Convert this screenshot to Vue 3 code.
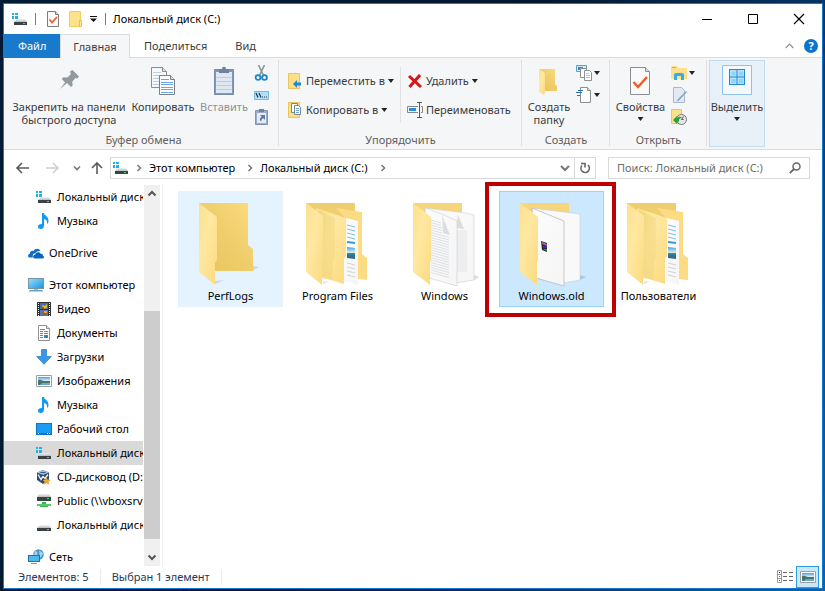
<script setup>
import { ref } from 'vue'

const query = ref('')
const tabs = ['Главная', 'Поделиться', 'Вид']
const crumbs = ['Этот компьютер', 'Локальный диск (C:)']

const tree = [
  [
    { icon: 'drive-win', label: 'Локальный диск (C:)', sub: true },
    { icon: 'music', label: 'Музыка', sub: true },
  ],
  [{ icon: 'cloud', label: 'OneDrive' }],
  [
    { icon: 'pc', label: 'Этот компьютер' },
    { icon: 'video', label: 'Видео', sub: true },
    { icon: 'document', label: 'Документы', sub: true },
    { icon: 'download', label: 'Загрузки', sub: true },
    { icon: 'picture', label: 'Изображения', sub: true },
    { icon: 'music', label: 'Музыка', sub: true },
    { icon: 'desktop', label: 'Рабочий стол', sub: true },
    { icon: 'drive-win', label: 'Локальный диск (C:)', sub: true, current: true },
    { icon: 'cd', label: 'CD-дисковод (D:)', sub: true },
    { icon: 'netdrive', label: 'Public (\\\\vboxsrv)', sub: true },
    { icon: 'drive', label: 'Локальный диск (E:)', sub: true },
  ],
  [{ icon: 'network', label: 'Сеть' }],
]

const files = [
  { icon: 'folder-empty', label: 'PerfLogs', state: 'hovered' },
  { icon: 'folder-mixed', label: 'Program Files' },
  { icon: 'folder-docs', label: 'Windows' },
  { icon: 'folder-old', label: 'Windows.old', state: 'selected', marked: true },
  { icon: 'folder-mixed', label: 'Пользователи' },
]
</script>

<template>
  <div class="screen">
    <svg class="sprite" aria-hidden="true">
      <defs>
        <linearGradient id="g-back" x1="0" x2="1" y1="1" y2="0">
          <stop offset="0" stop-color="#e9c45c" /><stop offset=".5" stop-color="#efcd6b" /><stop offset="1" stop-color="#fcdc80" />
        </linearGradient>
        <linearGradient id="g-flap" x1="0" x2="1" y1="0" y2="1">
          <stop offset="0" stop-color="#fbe08d" /><stop offset=".4" stop-color="#ffe8a2" /><stop offset="1" stop-color="#fbda7e" />
        </linearGradient>
        <linearGradient id="g-shade" x1="0" x2="1">
          <stop offset="0" stop-color="#e9cc6c" /><stop offset="1" stop-color="#f2d883" />
        </linearGradient>
        <linearGradient id="g-paper" x1="0" x2="1" y1="0" y2="1">
          <stop offset="0" stop-color="#fcfcfc" /><stop offset="1" stop-color="#f5f5f5" />
        </linearGradient>
        <linearGradient id="g-screen" x1="0" x2="1" y1="0" y2="1">
          <stop offset="0" stop-color="#8fdcff" /><stop offset="1" stop-color="#2196e0" />
        </linearGradient>
        <linearGradient id="g-photo" x1="0" x2="0" y1="0" y2="1">
          <stop offset="0" stop-color="#4e9fdb" /><stop offset=".45" stop-color="#d6edf8" /><stop offset=".55" stop-color="#3c7f86" /><stop offset="1" stop-color="#2b628d" />
        </linearGradient>
        <linearGradient id="g-drive" x1="0" x2="0" y1="0" y2="1">
          <stop offset="0" stop-color="#f2f2f2" /><stop offset="1" stop-color="#b9bbbd" />
        </linearGradient>
      </defs>

      <symbol id="drive" viewBox="0 0 16 16">
        <path d="M4 8h9l2 3H1z" fill="url(#g-drive)" />
        <path d="M1 11h14v3H1z" fill="#3c4145" />
        <path d="M11 12h2v1h-2z" fill="#35e04a" />
      </symbol>
      <symbol id="drive-win" viewBox="0 0 16 16">
        <path d="M5 8h8l2 3H2z" fill="url(#g-drive)" />
        <path d="M2 11h13v3H2z" fill="#3c4145" />
        <path d="M11 12h2v1h-2z" fill="#35e04a" />
        <path d="M0 2h2v2H0zM3 2h3v2H3zM0 5h2v3H0zM3 5h3v3H3z" fill="#18b4ea" />
      </symbol>
      <symbol id="music" viewBox="0 0 16 16">
        <path d="M6 0h2c0 3 5 3 4.500 8.500-.2 1.500-.8 2-1.500 2.500.6-3-.8-4.500-3-5v6.500C8 15 6.500 16 4.700 16 3 16 2 15 2 13.700c0-2 2-3 4-2.700z" fill="#0f9bf2" />
      </symbol>
      <symbol id="cloud" viewBox="0 0 16 16">
        <path d="M1 12.500C-.4 12-.3 9 1.800 8.700 1.800 6.500 4 5.300 5.600 6 7 3 11.500 3 12.300 6 9.500 5.500 8 7 7.500 8.200 5 8 4.200 10.500 5 12.500z" fill="#0f6fc6" />
        <path d="M6.500 13.500c-2-.5-2-3.800.8-4 .5-2.500 4-3.300 5.300-.8 1.800-.2 2.500 1 2.300 2 1.600.5 1.400 2.800-.2 2.800z" fill="#0a64c0" />
      </symbol>
      <symbol id="pc" viewBox="0 0 16 16">
        <path d="M0 1h16v11H0z" fill="#78939f" /><path d="M1 2h14v9H1z" fill="url(#g-screen)" />
        <path d="M6 12h4v1H6z" fill="#a9b4ba" /><path d="M1 13h14v2H1z" fill="#b9cbd3" /><path d="M2 13h12v1H2z" fill="#5ea8cf" />
      </symbol>
      <symbol id="video" viewBox="0 0 16 16">
        <path d="M1 1h14v14H1z" fill="#333" />
        <path d="M4 2h8v6H4z" fill="#456ea8" /><path d="M4 9h8v6H4z" fill="#5476a6" />
        <path d="M6 4l3 1 2-2v4l-4 1z" fill="#e8b92c" /><path d="M5 6h3v2H5z" fill="#c8432c" />
        <path d="M6 11l4-1 1 3-4 1z" fill="#b74a31" /><path d="M8 10h3v2H8z" fill="#d8ac35" />
        <path d="M2.500 2v13M13.500 2v13" stroke="#eee" stroke-dasharray="1 1" />
      </symbol>
      <symbol id="document" viewBox="0 0 16 16">
        <path d="M2.500.5h8l3 3v12h-11z" fill="#fff" stroke="#8d9499" /><path d="M10.500.5v3h3" fill="#ddd" stroke="#8d9499" />
        <path d="M4 4.500h5M4 6.500h3M8 6.500h4M4 8.500h3M8 8.500h4M4 10.500h3M4 12.500h3" stroke="#3f93c6" /><path d="M8 10h4v3H8z" fill="#3d84b4" />
      </symbol>
      <symbol id="download" viewBox="0 0 16 16">
        <path d="M5.500.5h5v7h4.800L8 15.300.7 7.500h4.800z" fill="#3a96e8" stroke="#2678c2" stroke-width=".7" />
      </symbol>
      <symbol id="picture" viewBox="0 0 16 16">
        <path d="M.5 2.500h15v11H.5z" fill="#fff" stroke="#9a9fa3" /><path d="M2 4h12v8H2z" fill="url(#g-photo)" />
        <path d="M2 7c3-1 5 2 12 2v3H2z" fill="#47746b" /><path d="M6 10h8v2H4z" fill="#6ea9d1" />
      </symbol>
      <symbol id="desktop" viewBox="0 0 16 16">
        <path d="M0 2h16v12H0z" fill="#0d76c7" /><path d="M1 3h14v9H1z" fill="#1b9cf4" /><path d="M2 12h1v1H2zM11 12h1v1h-1zM13 12h1v1h-1z" fill="#fff" />
      </symbol>
      <symbol id="cd" viewBox="0 0 16 16">
        <path d="M7 1l6 2.500v7L7 15l-6-4V3.500z" fill="#2c4a70" /><path d="M1 3.500L7 1l6 2.500L7 6z" fill="#a9bed4" />
        <path d="M2 5.500l3 5 2-3M7 7.500l2 2 3-4" stroke="#eaf1f7" fill="none" stroke-width="1.400" /><path d="M4.500 3.500h5" stroke="#365a85" />
        <path d="M10.500 8.500l1.300 2.200 2.700.3-1.800 1.800.4 2.700-2.600-1.200-2.500 1.200.5-2.700L6.700 11l2.600-.3z" fill="#f0a52c" />
      </symbol>
      <symbol id="netdrive" viewBox="0 0 16 16">
        <path d="M3 1h10l2 3H1z" fill="url(#g-drive)" /><path d="M1 4h14v4H1z" fill="#3c4145" /><path d="M11 5h2v1h-2z" fill="#35e04a" />
        <path d="M6 9h4v2h2v3H4v-3h2z" fill="#35b34a" /><path d="M1 11h14v2H1z" fill="#58c969" />
      </symbol>
      <symbol id="network" viewBox="0 0 16 16">
        <circle cx="10.500" cy="5.500" r="5.300" fill="#4b96cd" /><path d="M7 2c2 0 3 2 2 4L6 7M11 1c1 2 4 2 4 4l-3 4" fill="#a6d5ef" />
        <path d="M0 6h12v7H0z" fill="#2a6faa" /><path d="M1 7h10v5H1z" fill="#4db8f0" /><path d="M3 14h6v1H3z" fill="#7c9db5" />
      </symbol>

      <symbol id="folder-empty" viewBox="0 0 69 88">
        <path d="M19 84l9-4-9 1zM56 71l7-4-6-1z" fill="#9aa7b3" opacity=".35" />
        <path d="M3 3h49v42l5 4v22H3z" fill="url(#g-back)" />
        <path d="M3 3l18 14v43l-2 3v22L3 72z" fill="url(#g-flap)" />
      </symbol>
      <symbol id="folder-mixed" viewBox="0 0 69 88">
        <path d="M20 84l6-3-6 1z" fill="#999" opacity=".35" />
        <path d="M3 3h49v40H3z" fill="#efce70" />
        <path d="M33 8l26 4v42l5 4v22l-9-1-12-60z" fill="#fbdc82" />
        <path d="M43 18l12 3v64l-14-4z" fill="url(#g-paper)" />
        <path d="M44 25l8 2M44 29l8 2M44 33l8 2M44 37l8 2" stroke="#7cc0de" />
        <path d="M44 42l8 1" stroke="#3b9ad3" stroke-width="2" />
        <path d="M44 47l8 1v11l-8-1z" fill="url(#g-photo)" />
        <path d="M44 63l8 2M44 67l8 2M44 71l8 2M44 75l8 2" stroke="#d2d2d2" />
        <path d="M13 8l30 10v38l-2 3v25L14 76z" fill="url(#g-flap)" />
        <path d="M15 10l17 8v40l-2 3v19l-12-2z" fill="url(#g-shade)" opacity=".5" />
        <path d="M3 3l17 13v42l-1 3v24L3 72z" fill="url(#g-flap)" />
      </symbol>
      <symbol id="folder-docs" viewBox="0 0 69 88">
        <path d="M64 80l5-3-5-2z" fill="#999" opacity=".35" />
        <path d="M3 3h49v40H3z" fill="#f5d67c" />
        <path d="M15 8l41 5 8 2v65l-18 3z" fill="url(#g-paper)" stroke="#d2d2d2" stroke-width=".6" />
        <path d="M48 15l6 14-8-1z" fill="#dcdcdc" />
        <path d="M47 31h10M47 33h10M47 35h10M47 37h10M47 39h10M47 41h10M47 43h10M47 45h10M47 47h10M47 49h10M47 51h10M47 53h10M47 55h10M47 57h10M47 59h10M47 61h10M47 63h10M47 65h10M47 67h10M47 69h10M47 71h10" stroke="#dde0e2" stroke-width=".8" />
        <path d="M15 8l17 6 15 7v65l-28-8z" fill="url(#g-paper)" stroke="#cfcfcf" stroke-width=".6" />
        <path d="M32 15l8 20-7-2z" fill="#dedede" />
        <path d="M21 20l10 3M21 22.500l10 3M21 25l11 3M21 27.500l11 3M21 30l11 3M21 32.500l18 5M21 35l18 5M21 37.500l18 5M21 40l18 5M21 42.500l18 5M21 45l18 5M21 47.500l18 5M21 50l18 5M21 52.500l18 5M21 55l18 5M21 57.500l18 5M21 60l18 5M21 62.500l18 5M21 65l18 5M21 67.500l18 5M21 70l18 5M21 72.500l18 5" stroke="#dadde0" stroke-width=".9" />
        <path d="M3 3l18 14v43l-1 3v22L3 72z" fill="url(#g-flap)" />
      </symbol>
      <symbol id="folder-old" viewBox="0 0 69 88">
        <path d="M63 80l6-3-6-2z" fill="#789" opacity=".35" />
        <path d="M3 3h49v40H3z" fill="#f5d67c" />
        <path d="M15 8l48 6v66l-17 3z" fill="#f9f9f9" stroke="#c9cdd0" stroke-width=".6" />
        <path d="M15 8l32 13v65l-28-8z" fill="url(#g-paper)" stroke="#b4b4b4" stroke-width=".7" />
        <path d="M24 41l6 2v9l-5-2z" fill="#2b2633" /><path d="M25 42l5 2v2l-5-2z" fill="#b4628c" /><path d="M26 46l4 0v2h-4z" fill="#2a2fb0" /><path d="M26 49l4 0v2z" fill="#2d9a3c" />
        <path d="M3 3l18 14v43l-1 3v22L3 72z" fill="url(#g-flap)" />
      </symbol>
    </svg>

    <main class="window">
      <header class="titlebar">
        <svg class="i16"><use href="#drive-win" /></svg>
        <span class="bar"></span>
        <button class="quick" aria-label="Свойства">
          <svg class="quick-icon" viewBox="0 0 14 16"><path d="M1.500.5h8l3 3v12h-11z" fill="#fafafa" stroke="#7c7c7c" /><path d="M9.500.5v3h3" fill="#ddd" stroke="#7c7c7c" /><path d="M3.500 8.500l2.500 3 5-5.500" fill="none" stroke="#ee5b1e" stroke-width="1.800" /></svg>
        </button>
        <button class="quick" aria-label="Новая папка">
          <svg class="quick-icon" viewBox="0 0 14 16"><path d="M1.500.5h11v15h-11z" fill="#ffe18a" stroke="#f2cc62" /><path d="M11.500 9.500h2v6h-2z" fill="#ffedb0" stroke="#e9bf50" /></svg>
        </button>
        <button class="quick more" aria-label="Настройка панели">
          <svg class="more-icon" viewBox="0 0 8 6"><path d="M0 0h7v1H0zM0 2.500h7L3.500 6z" fill="#111" /></svg>
        </button>
        <span class="bar"></span>
        <h1 class="title">Локальный диск (C:)</h1>
        <div class="window-buttons">
          <button aria-label="Свернуть"><svg viewBox="0 0 12 12"><path d="M1 6.500h10" stroke="#000" /></svg></button>
          <button aria-label="Развернуть"><svg viewBox="0 0 12 12"><path d="M1.500 1.500h9v9h-9z" fill="none" stroke="#000" /></svg></button>
          <button aria-label="Закрыть"><svg viewBox="0 0 12 12"><path d="M1 1l10 10M11 1L1 11" stroke="#000" stroke-width="1.200" /></svg></button>
        </div>
      </header>

      <nav class="tabs">
        <button class="tab file">Файл</button>
        <button v-for="(tab, i) in tabs" :key="tab" class="tab" :class="{ active: i === 0 }">{{ tab }}</button>
        <div class="tab-tools">
          <button aria-label="Свернуть ленту"><svg class="fold" viewBox="0 0 9 6"><path d="M.7 5l3.800-3.800L8.300 5" fill="none" stroke="#8d8d8d" stroke-width="1.200" /></svg></button>
          <button class="help" aria-label="Справка">?</button>
        </div>
      </nav>

      <section class="ribbon">
        <div class="group clipboard">
          <div class="tools">
            <button class="big pin">
              <svg class="art" viewBox="0 0 24 30"><path d="M13 5.500l2.500-1.500 6.500 6.500-1.700 2-1.800-.4-3.300 3.600.5 3.800-1.700 1.500-4-4-7.500 6.500L1.500 25 8 16.500 4.800 13l1.500-1.800 4 .4 3.500-3.300z" fill="#929a9e" /></svg>
              <span>Закрепить на панели<br />быстрого доступа</span>
            </button>
            <button class="big copy">
              <svg class="art" viewBox="0 0 24 30"><path d="M.5 1.500h11l4 4v16H.5z" fill="#f8f8f8" stroke="#8a8f93" /><path d="M11.500 1.500v4h4" fill="#ddd" stroke="#8a8f93" /><path d="M2 6.500h8M2 9.500h12M2 12.500h12M2 15.500h12M2 18.500h12" stroke="#b4d1ef" />
                <path d="M8.500 9.500h11l4 4v15h-15z" fill="#fff" stroke="#7b8084" /><path d="M19.500 9.500v4h4" fill="#ddd" stroke="#7b8084" /><path d="M10 13.500h8M10 16.500h12M10 18.500h12M10 21.500h12M10 23.500h12M10 26.500h12" stroke="#6aa6e8" /></svg>
              <span>Копировать</span>
            </button>
            <button class="big paste" disabled>
              <svg class="art" viewBox="0 0 24 30"><path d="M2.500 3.500h19v25h-19z" fill="#8497b8" stroke="#778bb0" /><path d="M4 6h16v21H4z" fill="#dfe7f1" /><path d="M4.500 11.500h15M4.500 15.500h15M4.500 19.500h15M4.500 23.500h15" stroke="#bccbdf" /><path d="M7 3h3c0-3 4-3 4 0h3v4H7z" fill="#70809f" /></svg>
              <span>Вставить</span>
            </button>
            <div class="stack">
              <button aria-label="Вырезать"><svg class="i16" viewBox="0 0 16 16"><path d="M4.500 0l4.800 10M10.500 0L5.700 10" stroke="#8b959c" stroke-width="1.600" /><circle cx="4" cy="12.500" r="2.400" fill="none" stroke="#1687d0" stroke-width="1.800" /><circle cx="10.500" cy="12.500" r="2.400" fill="none" stroke="#1687d0" stroke-width="1.800" /></svg></button>
              <button aria-label="Скопировать путь"><svg class="i16" viewBox="0 0 16 16"><path d="M.5 4.500h14v8H.5z" fill="#b5dff8" stroke="#77b9e2" /><path d="M2 6l2 4.500M5 6l2 4.500M8 10h1M10 10h1M12 10h1" stroke="#143c60" stroke-width="1.200" /></svg></button>
              <button aria-label="Вставить ярлык"><svg class="i16" viewBox="0 0 16 16"><path d="M1.500 1.500h12v14h-12z" fill="#9cadcb" stroke="#8092b4" /><path d="M3 4h9v10H3z" fill="#e5ecf6" /><path d="M5 0h5v3H5z" fill="#72829f" /><path d="M6 6h5v5L9.300 9.300C8 10 7 11 7.500 12.500 5 11.500 5.500 9 7.700 7.700z" fill="#6179a2" /></svg></button>
            </div>
          </div>
          <h2>Буфер обмена</h2>
        </div>

        <div class="group organize">
          <div class="tools">
            <div class="rows">
              <button class="row"><svg class="i16" viewBox="0 0 16 16"><path d="M1.500.5h11v15h-11z" fill="#ffe08a" stroke="#eac55c" /><path d="M6 11l4-4v2.500h4v3h-4V15z" fill="#2687d8" /></svg>Переместить в<i class="caret"></i></button>
              <button class="row"><svg class="i16" viewBox="0 0 16 16"><path d="M1.500.5h11v15h-11z" fill="#ffe08a" stroke="#eac55c" /><path d="M4.500 1.500h6v9h-6z" fill="#fff" stroke="#7d858b" /><path d="M7.500 3.500h4l2 2v7h-6z" fill="#fff" stroke="#7d858b" /><path d="M9 6.500h3M9 8.500h3M9 10.500h3" stroke="#6aa6e8" /></svg>Копировать в<i class="caret"></i></button>
            </div>
            <div class="rows second">
              <button class="row"><svg class="i16" viewBox="0 0 16 16"><path d="M2 3l12 11M13 2L2.500 14" stroke="#dc1212" stroke-width="3" /></svg>Удалить<i class="caret"></i></button>
              <button class="row"><svg class="i16" viewBox="0 0 16 16"><path d="M11 4.500H.5v6H11M14 4.500h1.500v6H14" fill="none" stroke="#888" /><path d="M2 6h7v3H2z" fill="#2a8ee0" /><path d="M10 .5h5M12.500 1v14M10 15.500h5" stroke="#555" fill="none" /></svg>Переименовать</button>
            </div>
          </div>
          <h2>Упорядочить</h2>
        </div>

        <div class="group create">
          <div class="tools">
            <button class="big new">
              <svg class="art" viewBox="0 0 24 30"><path d="M3 3h15v15l2 2v5H3z" fill="url(#g-back)" /><path d="M2 3l6 4v19l-1 3-5-3z" fill="url(#g-flap)" /></svg>
              <span>Создать<br />папку</span>
            </button>
            <div class="stack">
              <button aria-label="Создать элемент"><svg class="i16" viewBox="0 0 16 16"><path d="M.5.500h10v6H.5z" fill="#cfe9f8" stroke="#5c9ec9" /><path d="M2 2h5v3H2z" fill="#3e88b8" /><path d="M4.500 3.500h6v9h-6z" fill="#fff" stroke="#8a8f93" /><path d="M8.500 5.500h5l2 2v8h-7z" fill="#fff" stroke="#8a8f93" /><path d="M10 8.500h3M10 10.500h4M10 12.500h4" stroke="#eda99b" /></svg><i class="caret"></i></button>
              <button aria-label="Простой доступ"><svg class="i16" viewBox="0 0 16 16"><path d="M4.500.500h7l3 3v12h-10z" fill="#fff" stroke="#8a8f93" /><path d="M11.500.500v3h3" fill="#ddd" stroke="#8a8f93" /><path d="M2 3.500h5M0 5.500h6M1 8.500h3" stroke="#256eb0" /></svg><i class="caret"></i></button>
            </div>
          </div>
          <h2>Создать</h2>
        </div>

        <div class="group open">
          <div class="tools">
            <button class="big props">
              <svg class="art" viewBox="0 0 24 30"><path d="M1.500 1.500h15l4 4v23h-19z" fill="#fafafa" stroke="#8a8f93" /><path d="M16.500 1.500v4h4" fill="#ddd" stroke="#8a8f93" /><path d="M4.500 16l4.500 5 9-10" fill="none" stroke="#f0581c" stroke-width="2.400" /></svg>
              <span>Свойства</span><i class="caret"></i>
            </button>
            <div class="stack">
              <button aria-label="Открыть"><svg class="i16" viewBox="0 0 16 16"><path d="M0 1h6l1 2h9v11H0z" fill="#ffe08c" /><path d="M1 2h4v1H1z" fill="#e2aa36" /><path d="M3 15V9l2-1h6l2 1v6h-3v-4H6v4z" fill="#33ade9" /></svg><i class="caret"></i></button>
              <button aria-label="Изменить"><svg class="i16" viewBox="0 0 16 16"><path d="M2.500.500h8l3 3v12h-11z" fill="#e3e9f3" stroke="#a9b8d2" /><path d="M15 4l-8 8-1.500 2.500L8 13.500 16 5z" fill="#8ea3c8" /></svg></button>
              <button aria-label="Журнал"><svg class="i16" viewBox="0 0 16 16"><path d="M.5.500h10v14H.5z" fill="#ffe08a" stroke="#eac55c" /><circle cx="10.500" cy="10.500" r="5" fill="#e6e6e6" stroke="#777" /><path d="M10.500 10.500l2-3M10.500 10.500h2" stroke="#555" /><path d="M2 11l4-4v2c2-2 4-1 5 0-3 0-3 2-3 3.500L6 13v2z" fill="#27a243" /></svg></button>
            </div>
          </div>
          <h2>Открыть</h2>
        </div>

        <button class="big select">
          <svg class="select-art" viewBox="0 0 30 30"><path d="M.5.500h29v29H.5z" fill="#f4f9fe" stroke="#91c3ef" /><path d="M7 4h16v16H7z" fill="#2787d2" /><path d="M8 5h6.500v6.500H8zM15.500 5H22v6.500h-6.500zM8 12.500h6.500V19H8zM15.500 12.500H22V19h-6.500z" fill="#b4e2fb" /><path d="M9.500 6.500h4v4h-4zM17 6.500h4v4h-4zM9.500 14h4v4h-4zM17 14h4v4h-4z" fill="#8fd3f7" /></svg>
          <span>Выделить</span><i class="caret"></i>
        </button>
      </section>

      <section class="navigation">
        <button class="arrow" aria-label="Назад"><svg class="i16" viewBox="0 0 16 16"><path d="M2 8h12M7 3L2 8l5 5" fill="none" stroke="#5c5c5c" stroke-width="1.600" /></svg></button>
        <button class="arrow" aria-label="Вперёд" disabled><svg class="i16" viewBox="0 0 16 16"><path d="M2 8h12M9 3l5 5-5 5" fill="none" stroke="#d0d0d0" stroke-width="1.600" /></svg></button>
        <button class="arrow recent" aria-label="Последние места"><svg class="mini" viewBox="0 0 8 8"><path d="M1 2.500l3 3 3-3" fill="none" stroke="#777" stroke-width="1.600" /></svg></button>
        <button class="arrow up" aria-label="Вверх"><svg class="i16" viewBox="0 0 16 16"><path d="M8 14V3M3 8l5-5 5 5" fill="none" stroke="#5c5c5c" stroke-width="1.600" /></svg></button>
        <div class="address">
          <svg class="i16"><use href="#drive-win" /></svg>
          <svg class="sep" viewBox="0 0 8 8"><path d="M2.500 1l3 3-3 3" fill="none" stroke="#777" stroke-width="1.500" /></svg>
          <template v-for="crumb in crumbs" :key="crumb">
            <button class="crumb">{{ crumb }}</button>
            <svg class="sep" viewBox="0 0 8 8"><path d="M2.500 1l3 3-3 3" fill="none" stroke="#777" stroke-width="1.500" /></svg>
          </template>
          <button class="drop" aria-label="Предыдущие расположения"><svg class="chevron" viewBox="0 0 10 10"><path d="M1 3l4 4 4-4" fill="none" stroke="#777" stroke-width="2" /></svg></button>
          <button class="refresh" aria-label="Обновить"><svg class="glass" viewBox="0 0 12 12"><path d="M9 3.200A4.200 4.200 0 1 1 3 3.500M2 1.500h4v4" fill="none" stroke="#666" stroke-width="1.600" /></svg></button>
        </div>
        <label class="search">
          <input v-model="query" type="text" aria-label="Поиск" placeholder="Поиск: Локальный диск (C:)" />
          <svg class="glass" viewBox="0 0 12 12"><circle cx="7.500" cy="4.500" r="3.500" fill="none" stroke="#666" stroke-width="1.500" /><path d="M5 7L.8 11.200" stroke="#666" stroke-width="1.800" /></svg>
        </label>
      </section>

      <section class="content">
        <nav class="tree">
          <ul v-for="(branch, i) in tree" :key="i">
            <li v-for="node in branch" :key="node.label">
              <a href="#" :class="{ sub: node.sub, current: node.current }">
                <svg class="i16"><use :href="'#' + node.icon" /></svg>{{ node.label }}
              </a>
            </li>
          </ul>
        </nav>
        <div class="scrollbar">
          <button aria-label="Прокрутить вверх"><svg class="chevron" viewBox="0 0 10 10"><path d="M1.500 6.500L5 3l3.500 3.500" fill="none" stroke="#555" stroke-width="2" /></svg></button>
          <div class="track"><div class="thumb"></div></div>
          <button aria-label="Прокрутить вниз"><svg class="chevron" viewBox="0 0 10 10"><path d="M1.500 3.500L5 7l3.500-3.500" fill="none" stroke="#555" stroke-width="2" /></svg></button>
        </div>
        <div class="files">
          <button v-for="file in files" :key="file.label" class="tile" :class="file.state">
            <svg class="folder-art"><use :href="'#' + file.icon" /></svg>
            <span>{{ file.label }}</span>
            <span v-if="file.marked" class="mark"></span>
          </button>
        </div>
      </section>

      <footer class="status">
        <span class="stat">Элементов: 5</span>
        <span class="stat">Выбран 1 элемент</span>
        <div class="views">
          <button aria-label="Таблица"><svg class="i16" viewBox="0 0 16 16"><path d="M.5 1.500h4v12h-4zM.5 5.500h4M.5 9.500h4" fill="#fff" stroke="#999" /><path d="M2 3h1v1H2z" fill="#333" /><path d="M2 7h1v1H2z" fill="#2a7fd0" /><path d="M2 11h1v1H2z" fill="#c22" /><path d="M6 3.500h4M12 3.500h4M6 7.500h4M12 7.500h4M6 11.500h4M12 11.500h4" stroke="#666" /></svg></button>
          <button class="on" aria-label="Крупные значки"><svg class="i16"><use href="#picture" /></svg></button>
        </div>
      </footer>
    </main>
  </div>
</template>

<style>
body {
  margin: 0;
}
</style>

<style scoped>
* {
  box-sizing: border-box;
}
.screen {
  display: flex;
  flex-direction: column;
  height: 100vh;
  padding: 3px 2px 2px 3px;
  background: linear-gradient(115deg, #011a36 0%, #02182f 50%, #04305f 72%, #0a64ad 100%);
  font: 11px/16px "Noto Sans", "Open Sans", sans-serif;
  color: #000;
}
.sprite {
  display: block;
  width: 0;
  height: 0;
}
button {
  padding: 0;
  border: 0;
  background: none;
  font: inherit;
  color: inherit;
  white-space: nowrap;
}
svg {
  flex: none;
}
.window {
  flex: 1;
  min-height: 0;
  display: flex;
  flex-direction: column;
  border: 1px solid #1479d2;
  background: #fff;
}
.i16 {
  display: block;
  width: 16px;
  height: 16px;
}
.chevron {
  display: block;
  width: 10px;
  height: 10px;
}
.caret {
  flex: none;
  width: 6px;
  height: 4px;
  background: #222;
  clip-path: polygon(0 0, 100% 0, 50% 100%);
}

.titlebar {
  display: flex;
  align-items: center;
  height: 30px;
  padding-left: 8px;
}
.bar {
  width: 1px;
  height: 12px;
  margin: 0 7px;
  background: #7c7c7c;
}
.quick {
  width: 22px;
  padding-left: 3px;
}
.quick.more {
  width: 11px;
}
.quick-icon {
  display: block;
  width: 14px;
  height: 16px;
}
.more-icon {
  display: block;
  width: 8px;
  height: 6px;
}
.title {
  flex: 1;
  margin: 0;
  font-size: 11px;
  font-weight: 400;
}
.window-buttons {
  display: flex;
}
.window-buttons button {
  display: flex;
  justify-content: center;
  width: 46px;
}
.window-buttons svg {
  width: 12px;
  height: 12px;
}

.tabs {
  display: flex;
  height: 24px;
  box-shadow: inset 0 -1px #dadbdc;
}
.tab {
  padding: 0 14px;
  color: #3b3b3b;
}
.tab.file {
  width: 56px;
  background: #1979ca;
  color: #fff;
}
.tab.active {
  width: 70px;
  padding: 0;
  border: 1px solid #dadbdc;
  border-bottom: 0;
  background: #f5f6f7;
}
.tab-tools {
  display: flex;
  align-items: center;
  gap: 10px;
  margin-left: auto;
  padding-right: 4px;
}
.fold {
  display: block;
  width: 9px;
  height: 6px;
}
.help {
  width: 14px;
  height: 14px;
  border-radius: 50%;
  background: #0a73d0;
  color: #fff;
  font-weight: 700;
  line-height: 14px;
}

.ribbon {
  display: flex;
  height: 92px;
  border-bottom: 1px solid #dadbdc;
  background: #f5f6f7;
  color: #3b3b3b;
}
.group {
  position: relative;
  display: flex;
  flex-direction: column;
  padding: 2px 0;
}
.group::after {
  content: "";
  position: absolute;
  top: 2px;
  right: 0;
  bottom: 3px;
  width: 1px;
  background: #dfe0e1;
}
.group h2 {
  margin: 0;
  font-size: 11px;
  font-weight: 400;
  line-height: 14px;
  color: #5f5f5f;
  text-align: center;
}
.tools {
  flex: 1;
  display: flex;
}
.clipboard {
  width: 275px;
  padding-left: 4px;
}
.clipboard .stack {
  padding-left: 2px;
}
.organize {
  width: 243px;
}
.create {
  width: 88px;
}
.open {
  width: 97px;
}
.big {
  display: flex;
  flex-direction: column;
  align-items: center;
  padding-top: 6px;
  line-height: 13px;
}
.big:disabled {
  color: #919191;
}
.art {
  width: 24px;
  height: 30px;
  margin-bottom: 4px;
}
.big .caret {
  margin-top: 4px;
}
.pin {
  width: 122px;
}
.copy {
  width: 66px;
}
.paste {
  width: 56px;
}
.new {
  width: 54px;
}
.props {
  width: 61px;
}
.stack {
  display: flex;
  flex-direction: column;
  gap: 6px;
  padding-top: 5px;
}
.stack button {
  display: flex;
  align-items: center;
  gap: 2px;
}
.rows {
  display: flex;
  flex-direction: column;
  gap: 13px;
  height: 56px;
  margin-top: 7px;
  padding: 6px 0 0 8px;
}
.rows.second {
  padding-left: 6px;
  border-left: 1px solid #e1e2e3;
}
.rows:first-child {
  width: 121px;
}
.row {
  display: flex;
  align-items: center;
  gap: 3px;
}
.select {
  width: 56px;
  height: 87px;
  margin: 2px 0 0 2px;
  padding-top: 4px;
  border: 1px solid #c0dcf3;
  background: #e8f1f8;
}
.select-art {
  width: 30px;
  height: 30px;
  margin-bottom: 5px;
}

.navigation {
  display: flex;
  align-items: center;
  height: 35px;
  padding: 0 12px 0 11px;
}
.arrow {
  width: 29px;
}
.arrow.recent {
  width: 16px;
}
.arrow.up {
  width: 21px;
}
.mini {
  display: block;
  width: 8px;
  height: 8px;
}
.address {
  flex: 1;
  display: flex;
  align-items: center;
  height: 22px;
  padding-left: 2px;
  border: 1px solid #d9d9d9;
}
.sep {
  width: 8px;
  height: 8px;
  margin: 0 6px;
}
.crumb {
  margin-right: 5px;
}
.drop {
  margin-left: auto;
  padding: 0 4px;
}
.refresh {
  height: 20px;
  padding: 0 4px;
  border-left: 1px solid #d9d9d9;
}
.search {
  display: flex;
  align-items: center;
  width: 202px;
  height: 22px;
  margin-left: 12px;
  padding: 0 8px;
  border: 1px solid #d9d9d9;
}
.search input {
  flex: 1;
  min-width: 0;
  padding: 0;
  border: 0;
  outline: 0;
  font: inherit;
}
.search input::placeholder {
  color: #6d6d6d;
  opacity: 1;
}
.glass {
  display: block;
  width: 12px;
  height: 12px;
}

.content {
  flex: 1;
  display: flex;
  min-height: 0;
}
.tree {
  width: 139px;
  overflow: hidden;
}
.tree ul {
  margin: 0 0 8px;
  padding: 0;
  list-style: none;
}
.tree a {
  display: flex;
  align-items: center;
  gap: 5px;
  height: 24px;
  padding-left: 24px;
  color: #000;
  text-decoration: none;
  white-space: nowrap;
}
.tree a.sub {
  padding-left: 32px;
}
.tree a.current {
  background: #d9d9d9;
}
.scrollbar {
  display: flex;
  flex-direction: column;
  width: 16px;
  margin-left: 1px;
  background: #f0f0f0;
}
.scrollbar button {
  display: flex;
  align-items: center;
  justify-content: center;
  height: 18px;
}
.track {
  flex: 1;
  display: flex;
  flex-direction: column;
  justify-content: flex-end;
  padding-bottom: 9px;
}
.thumb {
  height: 68%;
  background: #cdcdcd;
}
.files {
  flex: 1;
  display: grid;
  grid-template-columns: repeat(auto-fill, 105px);
  align-content: start;
  gap: 2px;
  margin-left: 2px;
  padding: 6px 0 0 15px;
  border-left: 1px solid #f0f0f0;
}
.tile {
  position: relative;
  display: flex;
  flex-direction: column;
  align-items: center;
  height: 116px;
  padding-top: 8px;
  border: 1px solid transparent;
}
.tile.hovered {
  background: #e5f3ff;
}
.tile.selected {
  border-color: #99d1ff;
  background: #cce8ff;
}
.folder-art {
  width: 69px;
  height: 88px;
}
.mark {
  position: absolute;
  inset: -10px -13px -11px -15px;
  border: 4px solid #bd0000;
}

.status {
  display: flex;
  align-items: center;
  height: 22px;
  padding-left: 14px;
  color: #1e395b;
}
.stat {
  padding-right: 11px;
  margin-right: 11px;
  border-right: 1px solid #ebebeb;
}
.views {
  display: flex;
  align-items: center;
  gap: 3px;
  margin-left: auto;
  padding-right: 3px;
}
.views .on {
  width: 23px;
  height: 22px;
  padding-left: 3px;
  border: 1px solid #2a9bdc;
  background: #cbe8f6;
}
</style>
